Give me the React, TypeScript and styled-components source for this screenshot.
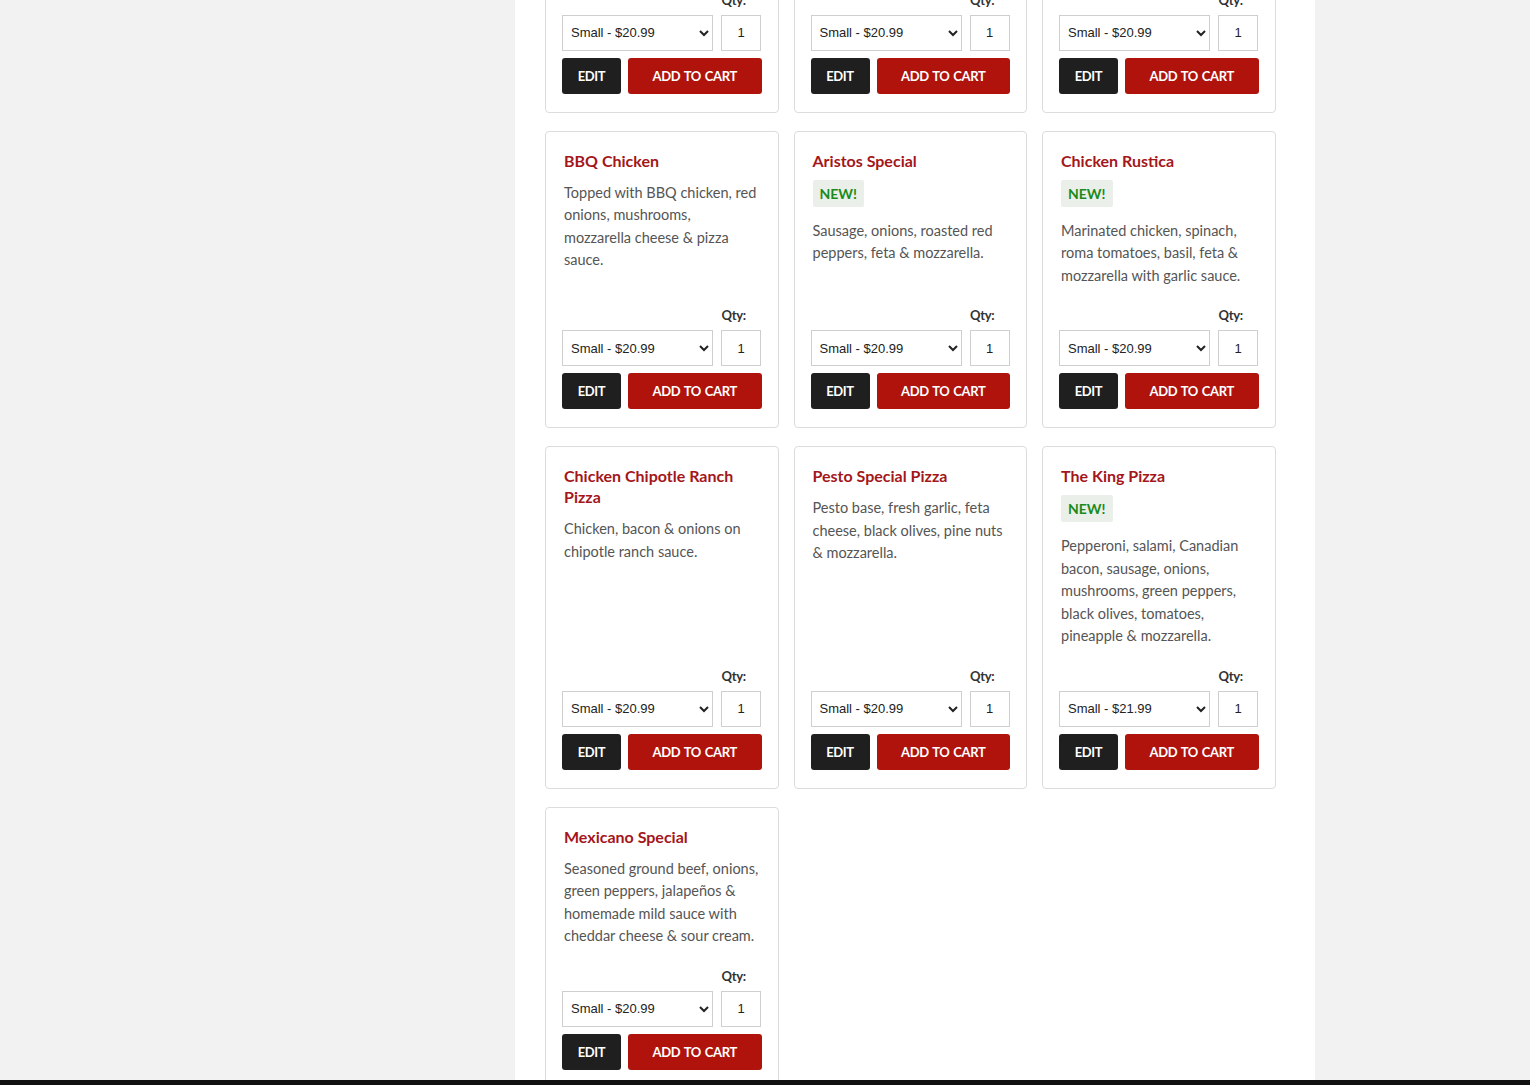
import styled, { createGlobalStyle } from "styled-components";

const GlobalStyle = createGlobalStyle`
  body {
    margin: 0;
    background: #f2f2f2;
    font-family: Lato, "Liberation Sans", sans-serif;
    overflow: hidden;
  }
`;

type Pizza = {
  name: string;
  isNew?: boolean;
  description: string;
  price: string;
};

const pizzas: Pizza[] = [
  { name: "Cheese Pizza", isNew: true, description: "Classic pizza sauce topped with our signature blend of mozzarella & cheddar.", price: "20.99" },
  { name: "Pepperoni Pizza", description: "Loaded with pepperoni, mozzarella cheese & pizza sauce.", price: "20.99" },
  { name: "Veggie Special", description: "Mushrooms, onions, green peppers, black olives, tomatoes & mozzarella.", price: "20.99" },
  { name: "BBQ Chicken", description: "Topped with BBQ chicken, red onions, mushrooms, mozzarella cheese & pizza sauce.", price: "20.99" },
  { name: "Aristos Special", isNew: true, description: "Sausage, onions, roasted red peppers, feta & mozzarella.", price: "20.99" },
  { name: "Chicken Rustica", isNew: true, description: "Marinated chicken, spinach, roma tomatoes, basil, feta & mozzarella with garlic sauce.", price: "20.99" },
  { name: "Chicken Chipotle Ranch Pizza", description: "Chicken, bacon & onions on chipotle ranch sauce.", price: "20.99" },
  { name: "Pesto Special Pizza", description: "Pesto base, fresh garlic, feta cheese, black olives, pine nuts & mozzarella.", price: "20.99" },
  { name: "The King Pizza", isNew: true, description: "Pepperoni, salami, Canadian bacon, sausage, onions, mushrooms, green peppers, black olives, tomatoes, pineapple & mozzarella.", price: "21.99" },
  { name: "Mexicano Special", description: "Seasoned ground beef, onions, green peppers, jalapeños & homemade mild sauce with cheddar cheese & sour cream.", price: "20.99" },
];

const PageLayout = styled.div`
  display: grid;
  grid-template-columns: 515px 800px 1fr;
  min-height: 100vh;
`;

const Gutter = styled.div`
  background: #f2f2f2;
`;

const Main = styled.main`
  background: #fff;
  padding: 0 25px 40px 30px;
  box-sizing: border-box;
`;

// the list is shown scrolled part way down: the first row is partly above the fold
const MenuGrid = styled.div`
  display: grid;
  grid-template-columns: repeat(3, 233.5px);
  column-gap: 15px;
  row-gap: 18px;
  margin-top: -185px;
`;

const Card = styled.div`
  display: flex;
  flex-direction: column;
  border: 1px solid #dcdcdc;
  border-radius: 4px;
  padding: 18px 16px 18px 16px;
  background: #fff;
`;

const Info = styled.div`
  padding-left: 2px;
  padding-right: 2px;
`;

const Title = styled.h3`
  margin: 0 0 11px;
  font-size: 16px;
  line-height: 21px;
  font-weight: 700;
  color: #a3161a;
`;

const NewBadge = styled.span`
  display: inline-block;
  height: 27px;
  line-height: 27px;
  padding: 0 7px;
  margin: -2px 0 13px;
  background: #eaefea;
  border-radius: 2px;
  color: #1b8a1b;
  font-weight: 700;
  font-size: 14px;
`;

const Description = styled.p`
  margin: 0 0 19px;
  font-size: 14.5px;
  line-height: 22.5px;
  color: #555;
`;

const OrderArea = styled.div`
  margin-top: auto;
`;

const QtyRow = styled.div`
  display: flex;
  justify-content: flex-end;
  margin-bottom: 6px;
`;

const QtyLabel = styled.label`
  width: 40px;
  font-size: 13px;
  line-height: 18px;
  font-weight: 700;
  color: #333;
  letter-spacing: -0.3px;
`;

const InputRow = styled.div`
  display: flex;
  gap: 8px;
  margin-bottom: 7px;
`;

const SizeSelect = styled.select`
  width: 151px;
  height: 36px;
  border: 1px solid #cfcfcf;
  background: #fff;
  padding: 0 4px;
  font-family: "Liberation Sans", Arial, sans-serif;
  font-size: 13px;
  color: #222;
`;

const QtyInput = styled.input`
  width: 40px;
  height: 36px;
  box-sizing: border-box;
  border: 1px solid #cfcfcf;
  text-align: center;
  font-family: "Liberation Sans", Arial, sans-serif;
  font-size: 13px;
  color: #222;
`;

const ButtonRow = styled.div`
  display: flex;
  gap: 7px;
`;

const ActionButton = styled.button<{ $primary?: boolean }>`
  height: 36px;
  width: ${(p) => (p.$primary ? "auto" : "59px")};
  flex: ${(p) => (p.$primary ? "1" : "none")};
  border: none;
  border-radius: 3px;
  background: ${(p) => (p.$primary ? "#b0130b" : "#1f1f1f")};
  color: #fff;
  font-family: Lato, "Liberation Sans", sans-serif;
  font-weight: 700;
  font-size: 13px;
  letter-spacing: -0.35px;
  word-spacing: 1px;
  text-transform: uppercase;
  cursor: pointer;
`;

const BottomBar = styled.div`
  position: fixed;
  left: 0;
  right: 0;
  bottom: 0;
  height: 5px;
  background: #111;
`;

const PizzaCard: React.FC<{ pizza: Pizza }> = ({ pizza }) => (
  <Card>
    <Info>
      <Title>{pizza.name}</Title>
      {pizza.isNew && <NewBadge>NEW!</NewBadge>}
      <Description>{pizza.description}</Description>
    </Info>
    <OrderArea>
      <QtyRow>
        <QtyLabel>Qty:</QtyLabel>
      </QtyRow>
      <InputRow>
        <SizeSelect defaultValue="small">
          <option value="small">Small - ${pizza.price}</option>
          <option value="medium">Medium</option>
          <option value="large">Large</option>
        </SizeSelect>
        <QtyInput type="text" defaultValue="1" />
      </InputRow>
      <ButtonRow>
        <ActionButton>Edit</ActionButton>
        <ActionButton $primary>Add to Cart</ActionButton>
      </ButtonRow>
    </OrderArea>
  </Card>
);

const App: React.FC = () => {
  return (
    <>
      <GlobalStyle />
      <PageLayout>
        <Gutter />
        <Main>
          <MenuGrid>
            {pizzas.map((p) => (
              <PizzaCard key={p.name} pizza={p} />
            ))}
          </MenuGrid>
        </Main>
        <Gutter />
      </PageLayout>
      <BottomBar />
    </>
  );
};

export default App;
